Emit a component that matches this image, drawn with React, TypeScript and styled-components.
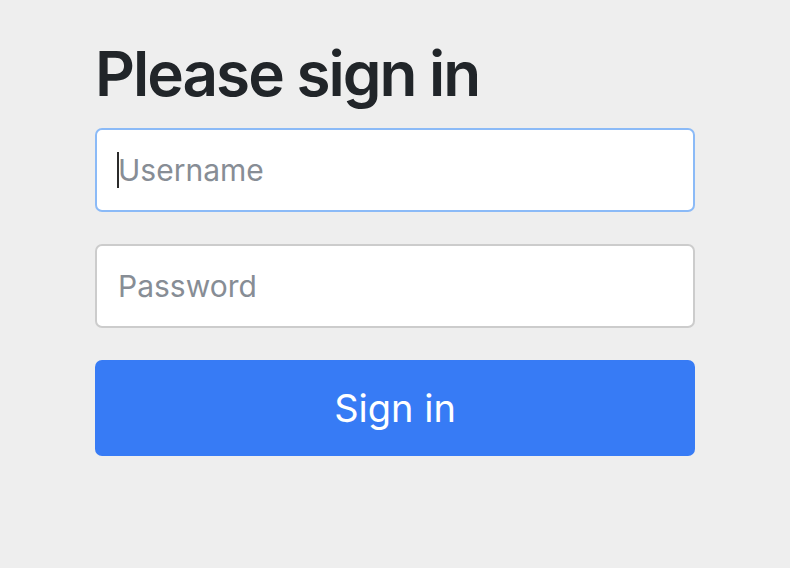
import styled, { createGlobalStyle } from "styled-components";

const GlobalStyle = createGlobalStyle`
  html, body {
    margin: 0;
    background: #eeeeee;
    font-family: Inter, "Liberation Sans", Arial, sans-serif;
  }
`;

export default function App(): JSX.Element {
  return (
    <>
      <GlobalStyle />
      <Page>
        <Form onSubmit={(e) => e.preventDefault()}>
          <Heading>Please sign in</Heading>
          <Field>
            <Input type="text" placeholder="Username" focused />
            <Caret />
          </Field>
          <Field>
            <Input type="password" placeholder="Password" />
          </Field>
          <SubmitButton type="submit">Sign in</SubmitButton>
        </Form>
      </Page>
    </>
  );
}

const Page = styled.div`
  padding: 36px 0 0 95px;
`;

const Form = styled.form`
  width: 600px;
  display: flex;
  flex-direction: column;
  gap: 32px;
`;

const Heading = styled.h2`
  margin: 0 0 -16px;
  font-size: 62px;
  font-weight: 600;
  line-height: 76px;
  letter-spacing: -2px;
  color: #212529;
`;

const Field = styled.div`
  position: relative;
`;

const Input = styled.input<{ focused?: boolean }>`
  display: block;
  box-sizing: border-box;
  width: 100%;
  height: 84px;
  padding: 0 21px;
  font-family: inherit;
  font-size: 30px;
  color: #212529;
  background: #ffffff;
  border: 2px solid ${(p) => (p.focused ? "#8bbaf7" : "#cccccc")};
  border-radius: 7px;
  outline: none;

  &::placeholder {
    color: #878d95;
    opacity: 1;
  }
`;

const Caret = styled.span`
  position: absolute;
  left: 22px;
  top: 24px;
  width: 2px;
  height: 36px;
  background: #2b2b2b;
`;

const SubmitButton = styled.button`
  height: 96px;
  border: 0;
  border-radius: 7px;
  background: #377bf5;
  color: #ffffff;
  font-family: inherit;
  font-size: 38px;
  cursor: pointer;
`;
